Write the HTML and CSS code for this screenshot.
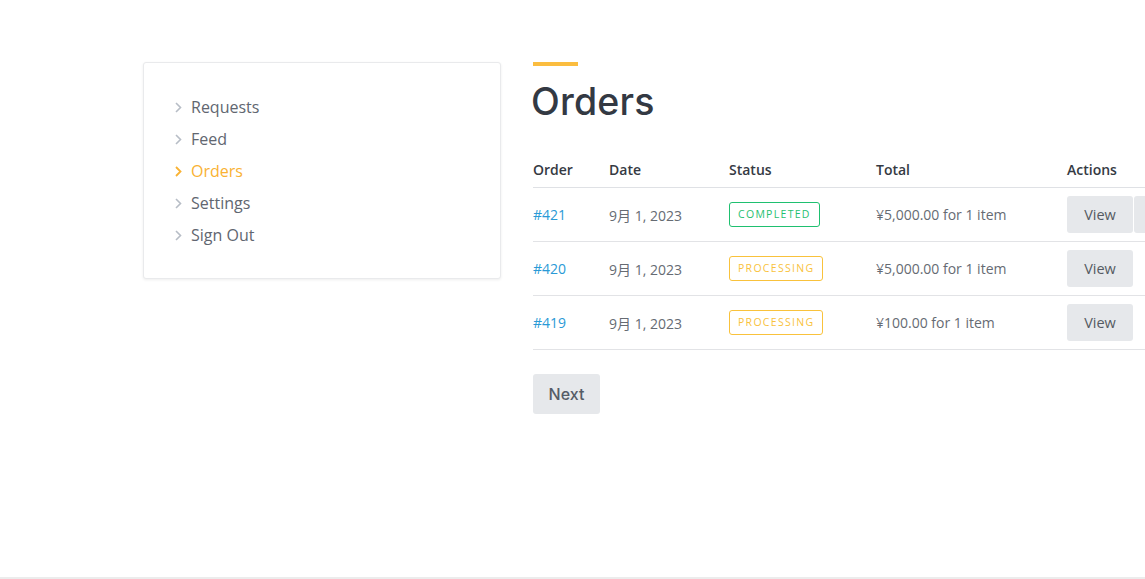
FILE: index.html
```html
<!DOCTYPE html>
<html lang="ja">
<head>
<meta charset="utf-8">
<title>Orders</title>
<link rel="stylesheet" href="styles.css">
</head>
<body>
<div class="page">
  <div class="layout">
    <aside class="sidebar">
      <ul class="menu">
        <li class="menu-item"><span class="chev"><svg width="7" height="11" viewBox="0 0 7 11"><path d="M1 1l4.5 4.5L1 10" fill="none" stroke="currentColor" stroke-width="1.6"/></svg></span>Requests</li>
        <li class="menu-item"><span class="chev"><svg width="7" height="11" viewBox="0 0 7 11"><path d="M1 1l4.5 4.5L1 10" fill="none" stroke="currentColor" stroke-width="1.6"/></svg></span>Feed</li>
        <li class="menu-item active"><span class="chev"><svg width="7" height="11" viewBox="0 0 7 11"><path d="M1 1l4.5 4.5L1 10" fill="none" stroke="currentColor" stroke-width="1.8"/></svg></span>Orders</li>
        <li class="menu-item"><span class="chev"><svg width="7" height="11" viewBox="0 0 7 11"><path d="M1 1l4.5 4.5L1 10" fill="none" stroke="currentColor" stroke-width="1.6"/></svg></span>Settings</li>
        <li class="menu-item"><span class="chev"><svg width="7" height="11" viewBox="0 0 7 11"><path d="M1 1l4.5 4.5L1 10" fill="none" stroke="currentColor" stroke-width="1.6"/></svg></span>Sign Out</li>
      </ul>
    </aside>
    <main class="content">
      <div class="accent"></div>
      <h1 class="title">Orders</h1>
      <table class="orders">
        <colgroup>
          <col class="c-order"><col class="c-date"><col class="c-status"><col class="c-total"><col class="c-actions">
        </colgroup>
        <thead>
          <tr><th>Order</th><th>Date</th><th>Status</th><th>Total</th><th>Actions</th></tr>
        </thead>
        <tbody>
          <tr>
            <td><a class="link">#421</a></td>
            <td>9月 1, 2023</td>
            <td><span class="badge done">Completed</span></td>
            <td>¥5,000.00 for 1 item</td>
            <td><div class="acts"><span class="btn">View</span><span class="btn"></span></div></td>
          </tr>
          <tr>
            <td><a class="link">#420</a></td>
            <td>9月 1, 2023</td>
            <td><span class="badge proc">Processing</span></td>
            <td>¥5,000.00 for 1 item</td>
            <td><div class="acts"><span class="btn">View</span></div></td>
          </tr>
          <tr>
            <td><a class="link">#419</a></td>
            <td>9月 1, 2023</td>
            <td><span class="badge proc">Processing</span></td>
            <td>¥100.00 for 1 item</td>
            <td><div class="acts"><span class="btn">View</span></div></td>
          </tr>
        </tbody>
      </table>
      <span class="next">Next</span>
    </main>
  </div>
  <div class="footer-line"></div>
</div>
</body>
</html>
```

FILE: styles.css
```css
html, body {
  margin: 0;
  padding: 0;
  background: #fff;
  overflow: hidden;
}
body {
  font-family: "Open Sans", "Noto Sans CJK JP", sans-serif;
  color: #666b73;
  width: 1145px;
  height: 579px;
}
.page {
  position: relative;
  height: 579px;
}
.layout {
  display: flex;
  gap: 32px;
  padding: 62px 0 0 143px;
  width: 1200px;
}
.sidebar {
  flex: 0 0 358px;
  width: 358px;
  box-sizing: border-box;
  margin-top: 0;
  align-self: flex-start;
  border: 1px solid #e9eaec;
  border-radius: 3px;
  box-shadow: 0 1px 3px rgba(0, 0, 0, 0.07);
  padding: 28px 31px 27px;
  background: #fff;
}
.menu {
  list-style: none;
  margin: 0;
  padding: 0;
}
.menu-item {
  display: flex;
  align-items: center;
  height: 32px;
  font-size: 16px;
  color: #616670;
}
.chev {
  display: inline-flex;
  width: 16px;
  color: #b7bdc6;
  margin-top: 1px;
}
.menu-item.active {
  color: #f9b233;
}
.menu-item.active .chev {
  color: #f9b233;
}
.content {
  flex: 0 0 680px;
}
.accent {
  width: 45px;
  height: 4px;
  background: #fbbd3f;
}
.title {
  font-family: "Inter", sans-serif;
  font-weight: 500;
  font-size: 37.5px;
  line-height: 48px;
  color: #333943;
  margin: 12px 0 0 -2px;
  letter-spacing: 0.2px;
}
.orders {
  border-collapse: collapse;
  table-layout: fixed;
  width: 680px;
  margin-top: 25px;
  font-size: 14px;
}
.c-order { width: 76px; }
.c-date { width: 120px; }
.c-status { width: 147px; }
.c-total { width: 191px; }
.c-actions { width: 146px; }
.orders th {
  text-align: left;
  font-weight: 600;
  color: #353a43;
  height: 36px;
  padding: 0;
  border-bottom: 1px solid #dfe1e5;
  vertical-align: middle;
}
.orders td {
  height: 53px;
  padding: 0;
  border-bottom: 1px solid #e2e3e6;
  vertical-align: middle;
  color: #666b73;
  white-space: nowrap;
}
.link {
  color: #2a9ad6;
  text-decoration: none;
}
.badge {
  display: inline-block;
  box-sizing: border-box;
  height: 25px;
  line-height: 23px;
  padding: 0 8px;
  font-size: 10.5px;
  letter-spacing: 1.3px;
  text-transform: uppercase;
  border: 1px solid;
  border-radius: 3px;
}
.badge.done {
  color: #1fc070;
  border-color: #1fc070;
}
.badge.proc {
  color: #f9c23c;
  border-color: #f9c23c;
}
.acts {
  display: flex;
  gap: 1px;
}
.btn {
  display: inline-flex;
  align-items: center;
  justify-content: center;
  width: 66px;
  height: 37px;
  background: #e6e8eb;
  border-radius: 3px;
  font-size: 14.5px;
  color: #555a62;
  flex: 0 0 66px;
}
.next {
  display: inline-flex;
  align-items: center;
  justify-content: center;
  margin-top: 24px;
  width: 67px;
  height: 40px;
  background: #e6e8eb;
  border-radius: 3px;
  font-family: "Inter", sans-serif;
  font-weight: 500;
  font-size: 16px;
  color: #555c67;
}
.footer-line {
  position: absolute;
  left: 0;
  right: 0;
  bottom: 0;
  height: 2px;
  background: #ececec;
}
```
